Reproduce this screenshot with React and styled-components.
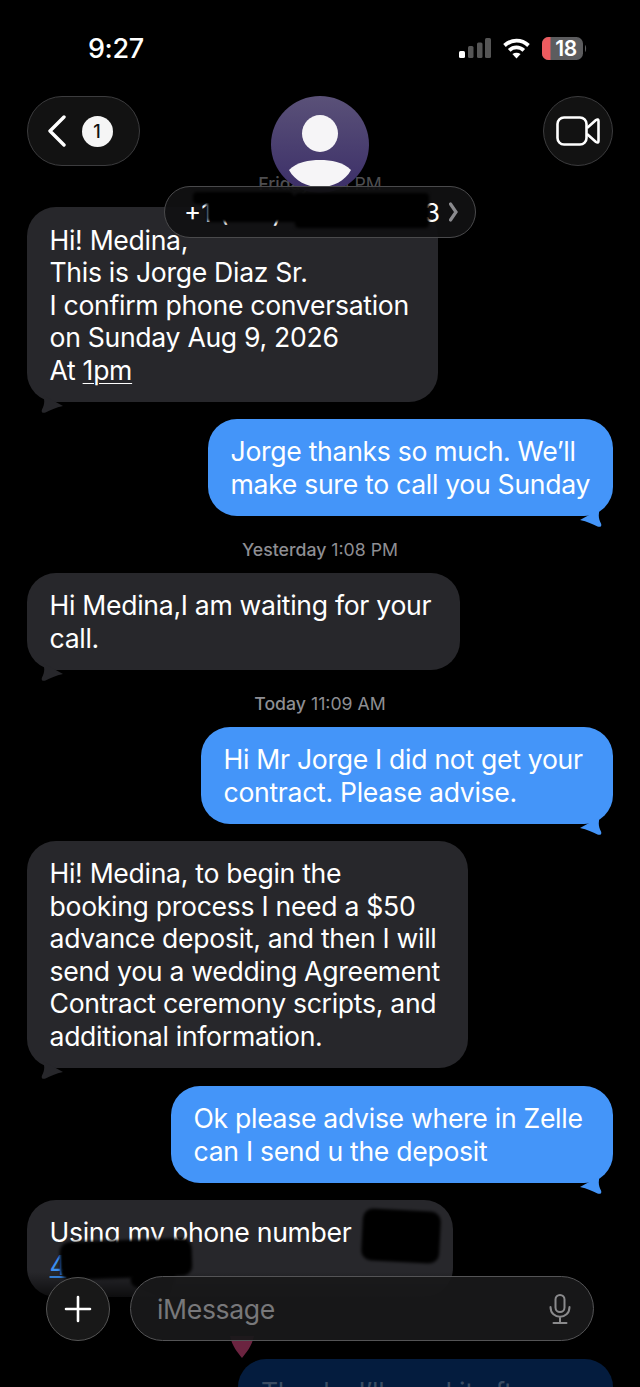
import styled, { createGlobalStyle } from 'styled-components';

const GlobalStyle = createGlobalStyle`
  html, body {
    margin: 0;
    background: #000;
  }
  * {
    box-sizing: border-box;
  }
`;

const Page = styled.div`
  position: relative;
  width: 640px;
  height: 1387px;
  overflow: hidden;
  background: #000;
  color: #fff;
  font-family: Inter, "Liberation Sans", sans-serif;
`;

const Thread = styled.div`
  display: flex;
  flex-direction: column;
  padding: 173px 27px 0;
`;

const Bubble = styled.div`
  position: relative;
  width: ${(p) => p.$w}px;
  margin-top: ${(p) => p.$top || 0}px;
  padding: 16.5px 0 15.5px 22.5px;
  align-self: ${(p) => (p.$mine ? 'flex-end' : 'flex-start')};
  border-radius: 29px;
  background: ${(p) => (p.$mine ? '#4495f9' : '#27272b')};
  font-size: 26.6px;
  line-height: 32.5px;
  letter-spacing: -0.3px;
  white-space: nowrap;
`;

const Tail = styled.svg`
  position: absolute;
  bottom: -11px;
  ${(p) => (p.$mine ? 'right: 11px;' : 'left: 14px;')}
  width: 24px;
  height: 18px;
`;

const Stamp = styled.div`
  margin-top: ${(p) => p.$top}px;
  height: 22px;
  text-align: center;
  font-size: 17.7px;
  line-height: 22px;
  color: ${(p) => (p.$dim ? '#4e4e50' : '#8e8e93')};
  b {
    font-weight: 500;
  }
`;

const Underlined = styled.span`
  text-decoration: underline;
  text-decoration-thickness: 1px;
  text-underline-offset: 3px;
`;

const TopBar = styled.div`
  position: absolute;
  top: 0;
  left: 0;
  right: 0;
  height: 240px;
`;

const Status = styled.div`
  display: flex;
  align-items: center;
  justify-content: space-between;
  height: 96px;
  padding: 0 53px 0 88px;
`;

const Clock = styled.div`
  font-size: 27px;
  font-weight: 500;
  letter-spacing: -0.4px;
`;

const StatusIcons = styled.div`
  display: flex;
  align-items: center;
  gap: 12px;
`;

const Nav = styled.div`
  display: flex;
  justify-content: space-between;
  padding: 0 27px;
`;

const GlassButton = styled.div`
  display: flex;
  align-items: center;
  justify-content: center;
  gap: 15px;
  width: ${(p) => p.$w}px;
  height: 70px;
  padding-right: ${(p) => p.$shift || 0}px;
  border-radius: 35px;
  background: #121212;
  border: 1px solid #3c3c3e;
`;

const Badge = styled.div`
  display: flex;
  align-items: center;
  justify-content: center;
  width: 31px;
  height: 31px;
  border-radius: 50%;
  background: #f5f5f5;
  color: #111;
  font-size: 18px;
  font-weight: 500;
`;

const Avatar = styled.div`
  position: absolute;
  top: 96px;
  left: 271px;
  width: 98px;
  height: 97px;
  border-radius: 50%;
  overflow: hidden;
  background: linear-gradient(#5a5178, #3b2e68);
`;

const NamePill = styled.div`
  position: absolute;
  top: 186px;
  left: 164px;
  display: flex;
  align-items: center;
  width: 312px;
  height: 52px;
  padding: 0 17px 0 19px;
  border-radius: 26px;
  background: rgba(17, 17, 18, 0.93);
  border: 1px solid #4a4a4c;
  font-size: 26px;
`;

const Scribble = styled.div`
  position: absolute;
  background: #000;
  border-radius: ${(p) => p.$round || 4}px;
  filter: blur(1.5px);
  left: ${(p) => p.$x}px;
  top: ${(p) => p.$y}px;
  width: ${(p) => p.$w}px;
  height: ${(p) => p.$h}px;
  transform: rotate(${(p) => p.$turn || 0}deg);
`;

const CloseParen = styled.span`
  margin-left: 44px;
`;

const PhoneEnd = styled.span`
  margin-left: auto;
`;

const PillChevron = styled.svg`
  margin-left: 9px;
`;

const BottomShade = styled.div`
  position: absolute;
  left: 0;
  right: 0;
  top: 1272px;
  height: 28px;
  background: linear-gradient(transparent, rgba(0, 0, 0, 0.75));
`;

const Link = styled.span`
  color: #3b8ef0;
  text-decoration: underline;
  text-decoration-thickness: 2px;
`;

const Heart = styled.svg`
  position: absolute;
  left: 226px;
  top: 1336px;
  width: 32px;
  height: 22px;
`;

const DimBubble = styled.div`
  position: absolute;
  left: 238px;
  top: 1359px;
  width: 375px;
  height: 60px;
  padding: 16.5px 0 0 23px;
  border-radius: 28px;
  background: #041c3e;
  color: #3a4c63;
  font-size: 26.6px;
  line-height: 32.5px;
  letter-spacing: -0.3px;
  white-space: nowrap;
`;

const Composer = styled.div`
  position: absolute;
  left: 46px;
  right: 46px;
  top: 1276px;
  display: flex;
  align-items: center;
  gap: 20px;
`;

const PlusButton = styled.div`
  display: flex;
  align-items: center;
  justify-content: center;
  flex: none;
  width: 64px;
  height: 64px;
  border-radius: 50%;
  background: #181818;
  border: 1px solid #555;
`;

const Field = styled.div`
  display: flex;
  align-items: center;
  justify-content: space-between;
  flex: 1;
  height: 65px;
  padding: 0 22px 0 26px;
  border-radius: 33px;
  background: rgba(25, 25, 26, 0.93);
  border: 1px solid #545456;
  font-size: 26.6px;
  letter-spacing: -0.35px;
  color: #78787a;
`;

const incomingTail = 'M2 0 L22 11 C15 12.5 9 15.5 4.5 17.5 C1.5 18.5 0 17 1 14.5 C3.5 10 4 5 2 0 Z';
const outgoingTail = 'M22 0 L2 11 C9 12.5 15 15.5 19.5 17.5 C22.5 18.5 24 17 23 14.5 C20.5 10 20 5 22 0 Z';

const Message = ({ mine, w, top, plain, children }) => (
  <Bubble $mine={mine} $w={w} $top={top}>
    {children}
    {!plain && (
      <Tail $mine={mine} viewBox="0 0 24 18">
        <path d={mine ? outgoingTail : incomingTail} fill={mine ? '#4495f9' : '#27272b'} />
      </Tail>
    )}
  </Bubble>
);

const SignalIcon = () => (
  <svg width="32" height="20" viewBox="0 0 32 20">
    <rect x="0" y="13" width="6" height="7" rx="1.5" fill="#fff" />
    <rect x="9" y="8" width="5.5" height="12" rx="1.5" fill="#555" />
    <rect x="18" y="4.5" width="5.5" height="15.5" rx="1.5" fill="#555" />
    <rect x="26" y="0" width="6" height="20" rx="1.5" fill="#555" />
  </svg>
);

const WifiIcon = () => (
  <svg width="27" height="21" viewBox="0 0 27 21" fill="none" stroke="#fff" strokeWidth="3.8">
    <path d="M1.5 7.5 C8.5 1 18.5 1 25.5 7.5" />
    <path d="M6.2 12.4 C10.5 8.4 16.5 8.4 20.8 12.4" />
    <path d="M13.5 20.5 L9.4 16 C12 14.2 15 14.2 17.6 16 Z" fill="#fff" stroke="none" />
  </svg>
);

const BatteryIcon = () => (
  <svg width="45" height="23" viewBox="0 0 45 23">
    <rect x="0" y="0" width="41" height="23" rx="6.5" fill="#5c5c5e" />
    <path d="M6.5 0 H8.5 V23 H6.5 A6.5 6.5 0 0 1 0 16.5 V6.5 A6.5 6.5 0 0 1 6.5 0 Z" fill="#ec5b5f" />
    <path d="M43 8 C44.5 9 44.5 14 43 15 Z" fill="#5c5c5e" />
    <text x="24" y="18.5" textAnchor="middle" fill="#fff" fontSize="21" fontWeight="600" fontFamily="Inter, sans-serif" letterSpacing="-0.5">18</text>
  </svg>
);

export default function App() {
  return (
    <Page>
      <GlobalStyle />
      <Thread>
        <Stamp $top={0} $dim>
          <b>Friday</b> 5:31 PM
        </Stamp>
        <Message w={411} top={12}>
          Hi! Medina,
          <br />
          This is Jorge Diaz Sr.
          <br />
          I confirm phone conversation
          <br />
          on Sunday Aug 9, 2026
          <br />
          At <Underlined>1pm</Underlined>
        </Message>
        <Message mine w={405} top={17}>
          Jorge thanks so much. We’ll
          <br />
          make sure to call you Sunday
        </Message>
        <Stamp $top={23}>
          <b>Yesterday</b> 1:08 PM
        </Stamp>
        <Message w={433} top={12}>
          Hi Medina,I am waiting for your
          <br />
          call.
        </Message>
        <Stamp $top={23}>
          <b>Today</b> 11:09 AM
        </Stamp>
        <Message mine w={412} top={12}>
          Hi Mr Jorge I did not get your
          <br />
          contract. Please advise.
        </Message>
        <Message w={441} top={17}>
          Hi! Medina, to begin the
          <br />
          booking process I need a $50
          <br />
          advance deposit, and then I will
          <br />
          send you a wedding Agreement
          <br />
          Contract ceremony scripts, and
          <br />
          additional information.
        </Message>
        <Message mine w={442} top={18}>
          Ok please advise where in Zelle
          <br />
          can I send u the deposit
        </Message>
        <Message w={426} top={17} plain>
          Using my phone number
          <br />
          <Link>4</Link>
        </Message>
      </Thread>

      <Scribble $x={60} $y={1240} $w={132} $h={38} $round={10} $turn={-2} />
      <Scribble $x={132} $y={1262} $w={42} $h={30} $round={8} $turn={18} />
      <Scribble $x={362} $y={1210} $w={78} $h={52} $round={10} $turn={3} />
      <BottomShade />
      <Heart viewBox="0 0 32 22">
        <path d="M4 0 H28 C26 10 20 17 16 22 C12 17 6 10 4 0 Z" fill="#6b2440" />
      </Heart>
      <DimBubble>Thanks I’ll send it after</DimBubble>

      <Composer>
        <PlusButton>
          <svg width="28" height="28" viewBox="0 0 28 28" stroke="#fff" strokeWidth="2.6" strokeLinecap="round">
            <path d="M14 2 V26 M2 14 H26" />
          </svg>
        </PlusButton>
        <Field>
          iMessage
          <svg width="22" height="30" viewBox="0 0 22 30" fill="none" stroke="#8a8a8c" strokeWidth="2" strokeLinecap="round">
            <rect x="6.5" y="1" width="9" height="17" rx="4.5" />
            <path d="M1.5 13 C1.5 26 20.5 26 20.5 13 M11 23 V28.5 M4.5 29 H17.5" />
          </svg>
        </Field>
      </Composer>

      <TopBar>
        <Status>
          <Clock>9:27</Clock>
          <StatusIcons>
            <SignalIcon />
            <WifiIcon />
            <BatteryIcon />
          </StatusIcons>
        </Status>
        <Nav>
          <GlassButton $w={113} $shift={8}>
            <svg width="20" height="32" viewBox="0 0 20 32" fill="none" stroke="#fff" strokeWidth="3.4" strokeLinecap="round" strokeLinejoin="round">
              <path d="M17 2 L3 16 L17 30" />
            </svg>
            <Badge>1</Badge>
          </GlassButton>
          <GlassButton $w={70}>
            <svg width="44" height="30" viewBox="0 0 44 30" fill="none" stroke="#fff" strokeWidth="2.6" strokeLinejoin="round">
              <rect x="1.5" y="1.5" width="29" height="27" rx="6.5" />
              <path d="M31 12 L40 4 C41.5 3 42.5 3.5 42.5 5 V25 C42.5 26.5 41.5 27 40 26 L31 18" />
            </svg>
          </GlassButton>
        </Nav>
        <Avatar>
          <svg width="98" height="97" viewBox="0 0 98 97">
            <ellipse cx="49" cy="37.5" rx="18" ry="18.5" fill="#f6f5f7" />
            <path d="M18 74 C26 66 38 64 49 64 C60 64 72 66 80 74 C74 85 62 91 49 91 C36 91 24 85 18 74 Z" fill="#f6f5f7" />
          </svg>
        </Avatar>
        <NamePill>
          +1 (<CloseParen>)</CloseParen>
          <PhoneEnd>3</PhoneEnd>
          <PillChevron width="9" height="20" viewBox="0 0 9 20" fill="none" stroke="#8a8a8e" strokeWidth="3.2" strokeLinecap="round">
            <path d="M1.5 2 L7 10 L1.5 18" />
          </PillChevron>
        </NamePill>
        <Scribble $x={193} $y={192} $w={100} $h={12} />
        <Scribble $x={207} $y={196} $w={95} $h={26} />
        <Scribble $x={295} $y={193} $w={134} $h={35} />
      </TopBar>
    </Page>
  );
}
